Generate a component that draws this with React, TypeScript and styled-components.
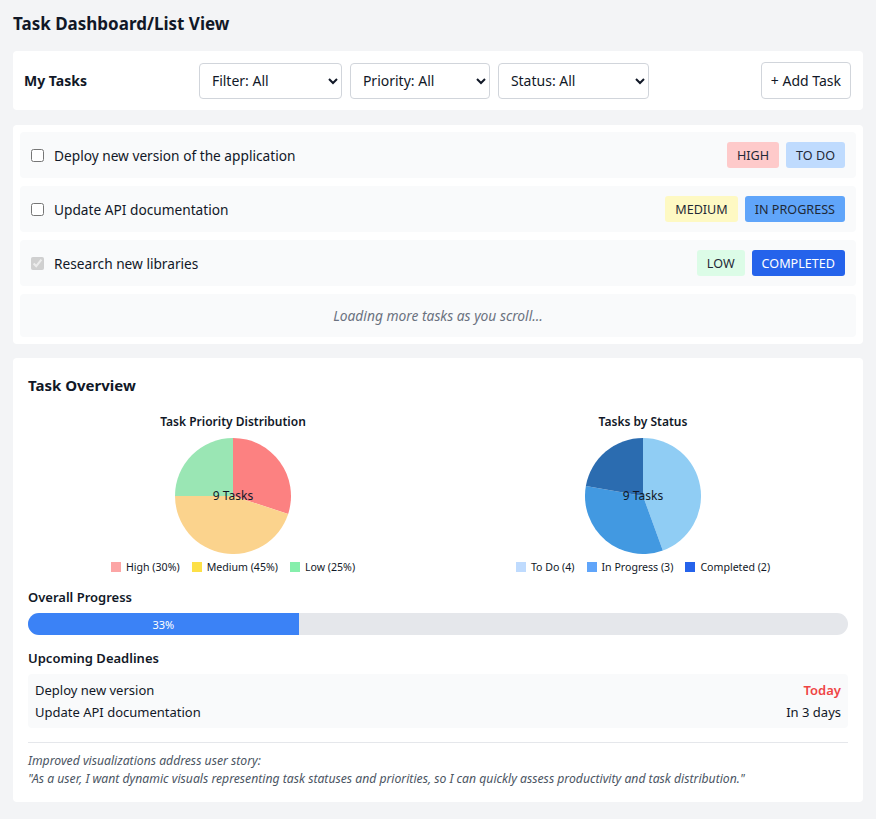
import React from 'react'
import styled, { createGlobalStyle } from 'styled-components'

const GlobalStyle = createGlobalStyle`
  * { box-sizing: border-box; }
  body {
    margin: 0;
    background: #f3f4f6;
    font-family: 'Segoe UI', 'Noto Sans', 'Open Sans', sans-serif;
    color: #111827;
  }
`

const Page = styled.div`
  padding: 13px;
`

const Title = styled.h1`
  margin: 0 0 16px;
  font-size: 17px;
  line-height: 22px;
  font-weight: 700;
`

const Card = styled.div<{ $pad?: string; $mb?: number }>`
  background: #fff;
  border-radius: 4px;
  padding: ${({ $pad }) => $pad || '15px'};
  margin-bottom: ${({ $mb }) => ($mb === undefined ? 15 : $mb)}px;
`

const Toolbar = styled.div`
  display: flex;
  align-items: center;
  justify-content: space-between;
`

const ToolbarTitle = styled.div`
  font-size: 14px;
  font-weight: 700;
`

const Filters = styled.div`
  display: flex;
  gap: 8px;
`

const Select = styled.select<{ $w: number }>`
  width: ${({ $w }) => $w}px;
  height: 36px;
  padding: 0 8px;
  border: 1px solid #d1d5db;
  border-radius: 4px;
  background: #fff;
  font-family: inherit;
  font-size: 14px;
  color: #111827;
`

const AddButton = styled.button`
  height: 37px;
  padding: 0 9px;
  border: 1px solid #d1d5db;
  border-radius: 4px;
  background: #fff;
  font-family: inherit;
  font-size: 14px;
  color: #111827;
`

const TaskList = styled.div`
  display: flex;
  flex-direction: column;
  gap: 8px;
`

const TaskRow = styled.div`
  display: flex;
  align-items: center;
  height: 46px;
  padding: 0 11px 0 10px;
  background: #f9fafb;
  border-radius: 4px;
`

const Check = styled.input`
  width: 13px;
  height: 13px;
  margin: 0 10px 0 1px;
`

const TaskName = styled.span`
  flex: 1;
  font-size: 13.7px;
`

const Badges = styled.div`
  display: flex;
  gap: 7px;
`

const Badge = styled.span<{ $bg: string; $fg?: string }>`
  display: inline-flex;
  align-items: center;
  height: 26px;
  padding: 0 10px;
  border-radius: 3px;
  font-size: 12.6px;
  background: ${({ $bg }) => $bg};
  color: ${({ $fg }) => $fg || '#1f2937'};
`

const LoadingRow = styled.div`
  height: 43px;
  display: flex;
  align-items: center;
  justify-content: center;
  background: #f9fafb;
  border-radius: 4px;
  font-size: 13.8px;
  font-style: italic;
  color: #6b7280;
`

const SectionTitle = styled.h2`
  margin: 0 0 14px;
  font-size: 15px;
  line-height: 24px;
  font-weight: 700;
`

const Charts = styled.div`
  display: grid;
  grid-template-columns: 1fr 1fr;
`

const ChartBox = styled.div`
  display: flex;
  flex-direction: column;
  align-items: center;
`

const ChartTitle = styled.div`
  font-size: 12px;
  font-weight: 600;
  line-height: 17px;
  margin: 2px 0 8px;
`

const PieWrap = styled.div`
  position: relative;
  width: 116px;
  height: 116px;
`

const PieLabel = styled.div`
  position: absolute;
  inset: 0 0 2px;
  display: flex;
  align-items: center;
  justify-content: center;
  font-size: 12px;
`

const Legend = styled.div`
  display: flex;
  gap: 12px;
  margin-top: 6px;
  font-size: 10.6px;
  line-height: 14px;
`

const LegendItem = styled.div`
  display: flex;
  align-items: center;
  gap: 5px;
`

const Swatch = styled.span<{ $c: string }>`
  width: 10px;
  height: 10px;
  background: ${({ $c }) => $c};
`

const Label = styled.div`
  font-size: 13px;
  font-weight: 600;
  line-height: 18px;
  margin: 14px 0 7px;
`

const Track = styled.div`
  height: 22px;
  border-radius: 11px;
  background: #e5e7eb;
  overflow: hidden;
`

const Fill = styled.div`
  height: 100%;
  background: #3b82f6;
  color: #fff;
  font-size: 11px;
  display: flex;
  align-items: center;
  justify-content: center;
`

const Deadlines = styled.div`
  background: #f9fafb;
  border-radius: 4px;
  padding: 5px 7px;
`

const DeadlineRow = styled.div`
  display: flex;
  justify-content: space-between;
  font-size: 13px;
  line-height: 22px;
`

const Due = styled.span<{ $urgent?: boolean }>`
  color: ${({ $urgent }) => ($urgent ? '#ef4444' : '#111827')};
  font-weight: ${({ $urgent }) => ($urgent ? 600 : 400)};
`

const Note = styled.div`
  margin-top: 14px;
  padding-top: 9px;
  border-top: 1px solid #e5e7eb;
  font-size: 12.2px;
  line-height: 18px;
  font-style: italic;
  color: #4b5563;
`

type Slice = { value: number; color: string }

const Pie = ({ slices }: { slices: Slice[] }) => {
  const total = slices.reduce((s, x) => s + x.value, 0)
  let acc = 0
  const r = 58
  const pt = (f: number) => {
    const a = f * 2 * Math.PI
    return `${58 + r * Math.sin(a)} ${58 - r * Math.cos(a)}`
  }
  return (
    <svg width="116" height="116" viewBox="0 0 116 116">
      {slices.map((s, i) => {
        const start = acc / total
        acc += s.value
        const end = acc / total
        const large = end - start > 0.5 ? 1 : 0
        return <path key={i} d={`M58 58 L${pt(start)} A${r} ${r} 0 ${large} 1 ${pt(end)} Z`} fill={s.color} />
      })}
    </svg>
  )
}

const tasks = [
  { name: 'Deploy new version of the application', done: false, priority: ['HIGH', '#fecaca'], status: ['TO DO', '#bfdbfe'] },
  { name: 'Update API documentation', done: false, priority: ['MEDIUM', '#fef9c3'], status: ['IN PROGRESS', '#60a5fa'] },
  { name: 'Research new libraries', done: true, priority: ['LOW', '#dcfce7'], status: ['COMPLETED', '#2563eb', '#fff'] },
]

const App = () => {
  return (
    <Page>
      <GlobalStyle />
      <Title>Task Dashboard/List View</Title>
      <Card $pad="11px 12px 11px 11px">
        <Toolbar>
          <ToolbarTitle>My Tasks</ToolbarTitle>
          <Filters>
            <Select $w={143} defaultValue="all">
              <option value="all">Filter: All</option>
            </Select>
            <Select $w={140} defaultValue="all">
              <option value="all">Priority: All</option>
            </Select>
            <Select $w={151} defaultValue="all">
              <option value="all">Status: All</option>
            </Select>
          </Filters>
          <AddButton>+ Add Task</AddButton>
        </Toolbar>
      </Card>

      <Card $pad="7px" $mb={14}>
        <TaskList>
          {tasks.map((t) => (
            <TaskRow key={t.name}>
              <Check type="checkbox" defaultChecked={t.done} disabled={t.done} />
              <TaskName>{t.name}</TaskName>
              <Badges>
                <Badge $bg={t.priority[1]}>{t.priority[0]}</Badge>
                <Badge $bg={t.status[1]} $fg={t.status[2]}>
                  {t.status[0]}
                </Badge>
              </Badges>
            </TaskRow>
          ))}
          <LoadingRow>Loading more tasks as you scroll...</LoadingRow>
        </TaskList>
      </Card>

      <Card $pad="15px 15px 14px" $mb={0}>
        <SectionTitle>Task Overview</SectionTitle>
        <Charts>
          <ChartBox>
            <ChartTitle>Task Priority Distribution</ChartTitle>
            <PieWrap>
              <Pie
                slices={[
                  { value: 30, color: '#fc8181' },
                  { value: 45, color: '#fbd38d' },
                  { value: 25, color: '#9ae6b4' },
                ]}
              />
              <PieLabel>9 Tasks</PieLabel>
            </PieWrap>
            <Legend>
              <LegendItem>
                <Swatch $c="#fca5a5" />
                High (30%)
              </LegendItem>
              <LegendItem>
                <Swatch $c="#fde047" />
                Medium (45%)
              </LegendItem>
              <LegendItem>
                <Swatch $c="#86efac" />
                Low (25%)
              </LegendItem>
            </Legend>
          </ChartBox>
          <ChartBox>
            <ChartTitle>Tasks by Status</ChartTitle>
            <PieWrap>
              <Pie
                slices={[
                  { value: 4, color: '#90cdf4' },
                  { value: 3, color: '#4299e1' },
                  { value: 2, color: '#2b6cb0' },
                ]}
              />
              <PieLabel>9 Tasks</PieLabel>
            </PieWrap>
            <Legend>
              <LegendItem>
                <Swatch $c="#bfdbfe" />
                To Do (4)
              </LegendItem>
              <LegendItem>
                <Swatch $c="#60a5fa" />
                In Progress (3)
              </LegendItem>
              <LegendItem>
                <Swatch $c="#2563eb" />
                Completed (2)
              </LegendItem>
            </Legend>
          </ChartBox>
        </Charts>

        <Label>Overall Progress</Label>
        <Track>
          <Fill style={{ width: '33%' }}>33%</Fill>
        </Track>

        <Label>Upcoming Deadlines</Label>
        <Deadlines>
          <DeadlineRow>
            <span>Deploy new version</span>
            <Due $urgent>Today</Due>
          </DeadlineRow>
          <DeadlineRow>
            <span>Update API documentation</span>
            <Due>In 3 days</Due>
          </DeadlineRow>
        </Deadlines>

        <Note>
          Improved visualizations address user story:
          <br />
          "As a user, I want dynamic visuals representing task statuses and priorities, so I can quickly assess
          productivity and task distribution."
        </Note>
      </Card>
    </Page>
  )
}

export default App
